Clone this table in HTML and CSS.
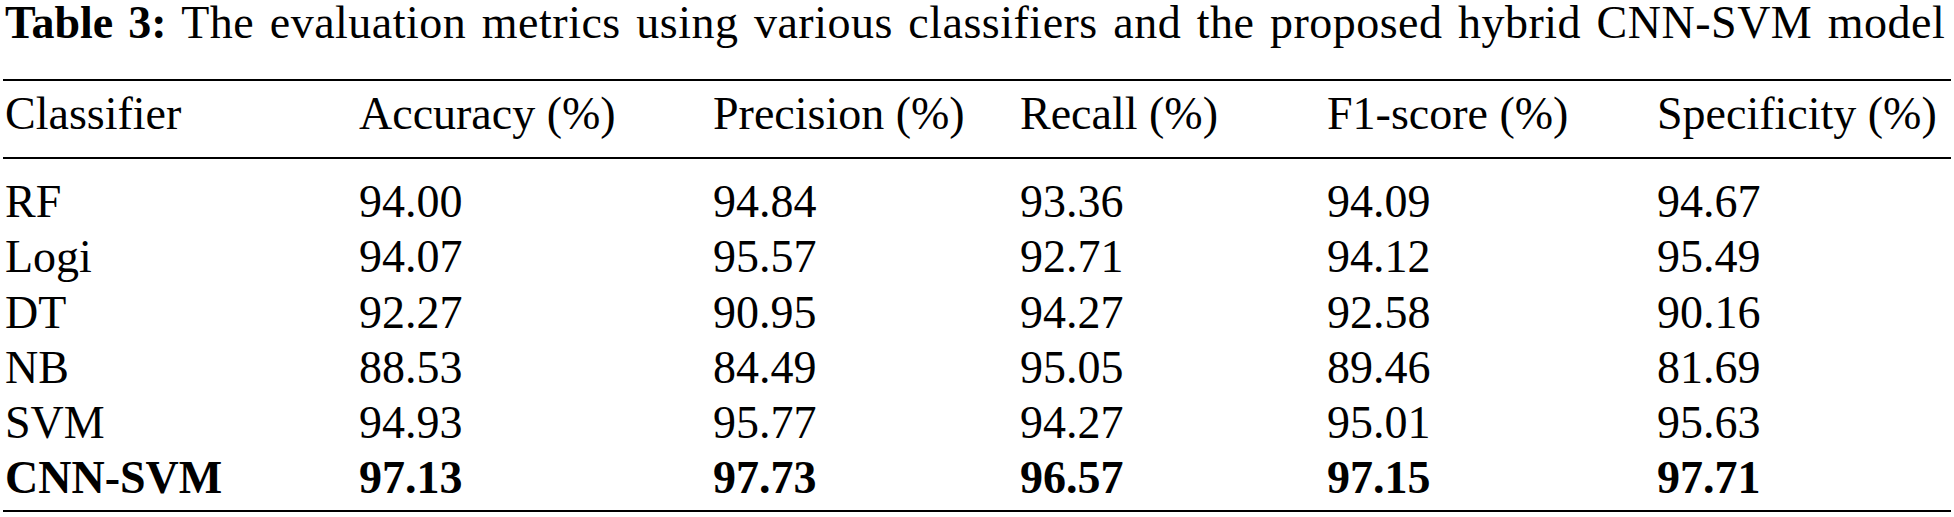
FILE: index.html
```html
<!DOCTYPE html>
<html lang="en">
<head>
  <meta charset="UTF-8">
  <title>Table 3</title>
  <link rel="stylesheet" href="styles.css">
</head>
<body>

<p class="caption"><strong>Table 3:</strong> The evaluation metrics using various classifiers and the proposed hybrid CNN-SVM model</p>

<table class="metricas">
  <colgroup>
    <col class="c-nombre">
    <col class="c-acc">
    <col class="c-prec">
    <col class="c-rec">
    <col class="c-f1">
    <col class="c-spec">
  </colgroup>
  <thead>
    <tr>
      <th>Classifier</th>
      <th>Accuracy (%)</th>
      <th>Precision (%)</th>
      <th>Recall (%)</th>
      <th>F1-score (%)</th>
      <th>Specificity (%)</th>
    </tr>
  </thead>
  <tbody>
    <tr class="primera">
      <td>RF</td><td>94.00</td><td>94.84</td><td>93.36</td><td>94.09</td><td>94.67</td>
    </tr>
    <tr>
      <td>Logi</td><td>94.07</td><td>95.57</td><td>92.71</td><td>94.12</td><td>95.49</td>
    </tr>
    <tr>
      <td>DT</td><td>92.27</td><td>90.95</td><td>94.27</td><td>92.58</td><td>90.16</td>
    </tr>
    <tr>
      <td>NB</td><td>88.53</td><td>84.49</td><td>95.05</td><td>89.46</td><td>81.69</td>
    </tr>
    <tr>
      <td>SVM</td><td>94.93</td><td>95.77</td><td>94.27</td><td>95.01</td><td>95.63</td>
    </tr>
    <tr class="mejor">
      <td>CNN-SVM</td><td>97.13</td><td>97.73</td><td>96.57</td><td>97.15</td><td>97.71</td>
    </tr>
  </tbody>
</table>

</body>
</html>
```

FILE: styles.css
```css
body {
  margin: 0;
  padding: 0 3px;
  background: #ffffff;
  color: #000000;
  font-family: "Liberation Serif", "Times New Roman", serif;
  font-size: 46px;
}
.caption {
  margin: 0 0 33px 2px;
  line-height: 46px;
  letter-spacing: 0.5px;
  word-spacing: 3.5px;
  white-space: nowrap;
}
.caption strong {
  font-weight: bold;
  letter-spacing: 0;
}
table.metricas {
  width: 1948px;
  border-collapse: collapse;
  table-layout: fixed;
  border-top: 2px solid #000;
  border-bottom: 2px solid #000;
}
.c-nombre { width: 354px; }
.c-acc { width: 354px; }
.c-prec { width: 307px; }
.c-rec { width: 307px; }
.c-f1 { width: 330px; }
.c-spec { width: 296px; }
th, td {
  text-align: left;
  padding: 0 0 0 2px;
  white-space: nowrap;
}
th {
  font-weight: normal;
  line-height: 46px;
  padding-top: 10px;
  padding-bottom: 20px;
  border-bottom: 2px solid #000;
}
td {
  line-height: 55.3px;
}
tr.primera td {
  padding-top: 15px;
}
tr.mejor td {
  font-weight: bold;
  padding-bottom: 4px;
}
```
